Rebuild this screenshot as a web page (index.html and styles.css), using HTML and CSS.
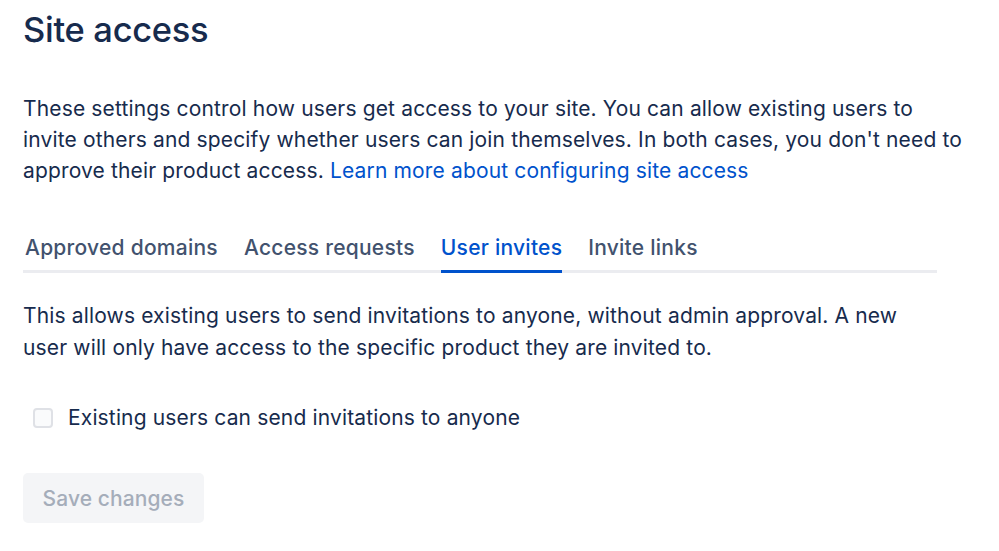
FILE: index.html
```
<!DOCTYPE html>
<html>
<head>
<meta charset="utf-8">
<link rel="stylesheet" href="styles.css">
</head>
<body>
<main class="page">
  <h1 class="title">Site access</h1>
  <p class="intro">These settings control how users get access to your site. You can allow existing users to invite others and specify whether users can join themselves. In both cases, you don't need to approve their product access. <a class="link" href="#">Learn more about configuring site access</a></p>
  <nav class="tabs">
    <div class="tab">Approved domains</div>
    <div class="tab">Access requests</div>
    <div class="tab active">User invites</div>
    <div class="tab">Invite links</div>
  </nav>
  <p class="desc">This allows existing users to send invitations to anyone, without admin approval. A new user will only have access to the specific product they are invited to.</p>
  <label class="check">
    <span class="box"></span>
    <span class="check-label">Existing users can send invitations to anyone</span>
  </label>
  <button class="save" disabled>Save changes</button>
</main>
</body>
</html>
```
FILE: styles.css
```
* { box-sizing: border-box; }
html, body { margin: 0; padding: 0; background: #fff; }
body { font-family: Inter, "Noto Sans", sans-serif; color: #172B4D; }
.page { padding: 0 23px; width: 999px; }
.title { margin: 0; padding-top: 10px; font-size: 34.5px; font-weight: 500; line-height: 40px; color: #172B4D; letter-spacing: -0.3px; }
.intro { margin: 43px 0 0; font-size: 21px; letter-spacing: 0.15px; line-height: 31px; max-width: 950px; }
.link { color: #0052CC; text-decoration: none; }
.tabs { display: flex; gap: 26px; margin-top: 48px; width: 914px; border-bottom: 3px solid #EBECF0; padding-left: 2px; }
.tab { font-size: 21px; letter-spacing: 0.25px; font-weight: 500; line-height: 28px; padding-bottom: 8px; color: #42526E; margin-bottom: -3px; border-bottom: 3px solid transparent; }
.tab.active { color: #0052CC; border-bottom-color: #0052CC; }
.desc { margin: 27px 0 0; font-size: 21px; letter-spacing: 0.15px; line-height: 32px; max-width: 900px; }
.check { display: flex; align-items: center; gap: 15px; margin-top: 40px; padding-left: 10px; }
.box { width: 20px; height: 20px; border: 2px solid #DFE1E6; background: #FAFBFC; border-radius: 4px; }
.check-label { font-size: 21px; letter-spacing: 0.15px; line-height: 28px; }
.save { margin-top: 41px; width: 181px; height: 50px; border: none; border-radius: 5px; background: #F4F5F7; color: #A5ADBA; font-family: Inter, sans-serif; font-size: 21px; letter-spacing: 0.1px; font-weight: 500; }
```
